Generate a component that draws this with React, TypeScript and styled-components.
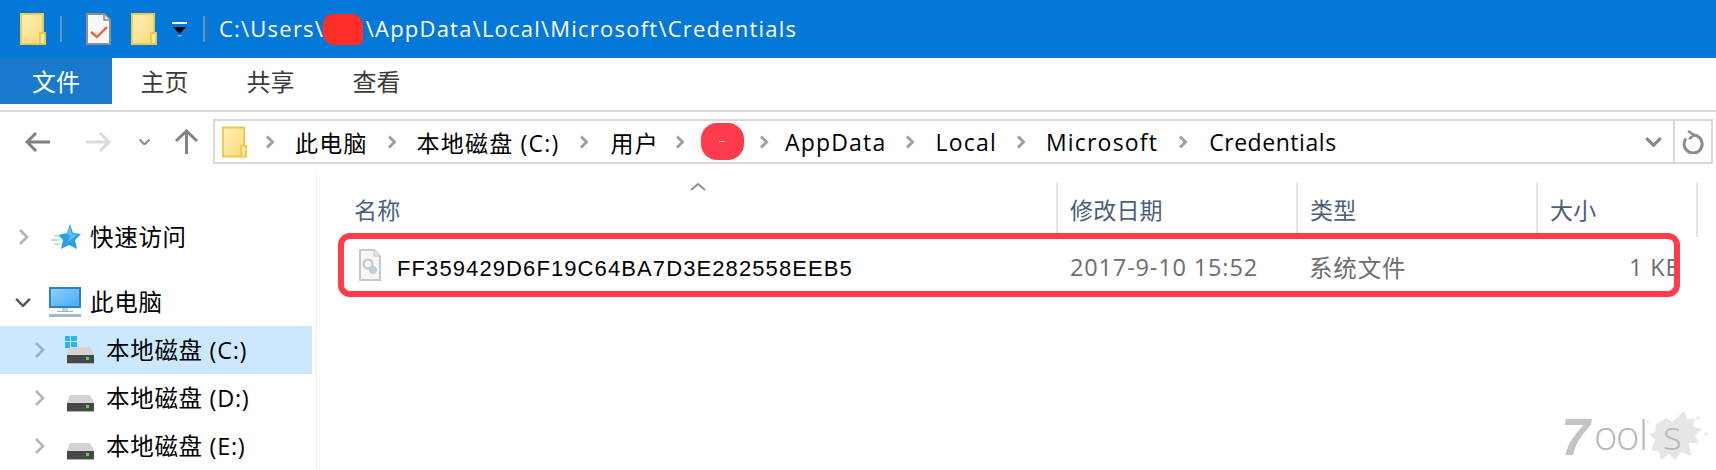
import React from "react";
import styled, { createGlobalStyle } from "styled-components";

const Global = createGlobalStyle`
  html, body { margin: 0; padding: 0; background: #fff; }
  body { width: 1716px; height: 470px; overflow: hidden; font-family: "Noto Sans", "Noto Sans CJK SC", sans-serif; }
`;

const FONT = `"Open Sans", "Noto Sans CJK SC", sans-serif`;

const Win = styled.div`
  position: relative;
  width: 1716px;
  height: 470px;
  overflow: hidden;
  display: flex;
  flex-direction: column;
  font-family: ${FONT};
`;

/* title bar */
const TitleBar = styled.div`
  height: 58px;
  background: #0378d7;
  display: flex;
  align-items: center;
  padding-left: 20px;
  flex: none;
`;
const TitleSep = styled.span<{ $ml: number }>`
  width: 5px;
  height: 26px;
  margin-left: ${p => p.$ml}px;
  box-sizing: border-box;
  border-left: 2px solid #4a9be0;
  border-right: 2px solid #2a6fb0;
  flex: none;
`;
const TitleSlot = styled.span<{ $ml: number }>`
  display: flex;
  margin-left: ${p => p.$ml}px;
  flex: none;
`;
const TitleText = styled.span`
  margin: 0 0 3px 11px;
  color: #fff;
  font-size: 22px;
  letter-spacing: 1.22px;
  white-space: nowrap;
  display: flex;
  align-items: center;
  position: relative;
`;
const Scribble = styled.span`
  position: absolute;
  left: 104px;
  top: 1px;
  width: 40px;
  height: 31px;
  background: #ff2e26;
  border-radius: 10px 12px 6px 12px;
`;

/* ribbon */
const Ribbon = styled.div`
  height: 46px;
  display: flex;
  flex: none;
`;
const Tab = styled.div<{ $active?: boolean; $w: number }>`
  width: ${p => p.$w}px;
  display: flex;
  align-items: center;
  justify-content: center;
  padding-bottom: 2px;
  box-sizing: border-box;
  font-size: 24px;
  background: ${p => (p.$active ? "#1979ca" : "#fff")};
  color: ${p => (p.$active ? "#fff" : "#3b3b3b")};
`;
const RibbonRule = styled.div`
  margin-top: 6px;
  height: 2px;
  background: #dadada;
  flex: none;
`;

/* navigation */
const NavRow = styled.div`
  height: 58px;
  display: flex;
  align-items: center;
  flex: none;
  padding-top: 1px;
  box-sizing: border-box;
`;
const NavBtn = styled.span<{ $w: number }>`
  width: ${p => p.$w}px;
  display: flex;
  justify-content: center;
  flex: none;
`;
const AddressBar = styled.div`
  margin-left: 8px;
  width: 1500px;
  height: 45px;
  box-sizing: border-box;
  border: 2px solid #d9d9d9;
  display: flex;
  align-items: center;
  flex: none;
`;
const Crumbs = styled.div`
  flex: 1;
  display: flex;
  align-items: center;
  padding-left: 7px;
`;
const Crumb = styled.span<{ $tight?: boolean }>`
  font-size: 23px;
  letter-spacing: ${p => (p.$tight ? 0.55 : 1.2)}px;
  color: #000;
  white-space: nowrap;
`;
const CrumbChevron = styled.span<{ $l: number; $r: number }>`
  display: flex;
  margin: 0 ${p => p.$r}px 0 ${p => p.$l}px;
`;
const RedactDot = styled.span`
  width: 43px;
  height: 37px;
  border-radius: 16px;
  background: #ff3b4c;
  display: flex;
  align-items: center;
  justify-content: center;
  &::after {
    content: "";
    width: 6px;
    height: 1px;
    background: #ffd0d0;
  }
`;
const BarEnd = styled.span<{ $w: number; $line?: boolean }>`
  width: ${p => p.$w}px;
  height: 100%;
  display: flex;
  align-items: center;
  justify-content: center;
  box-sizing: border-box;
  border-left: ${p => (p.$line ? "2px solid #d9d9d9" : "none")};
  flex: none;
`;

/* body */
const Body = styled.div`
  flex: 1;
  display: flex;
  min-height: 0;
  padding-top: 1px;
`;
const Sidebar = styled.div`
  width: 312px;
  padding-top: 42px;
  display: flex;
  flex-direction: column;
  flex: none;
`;
const TreeRow = styled.div<{ $level: number; $selected?: boolean; $gap?: number }>`
  height: 48px;
  flex: none;
  display: flex;
  align-items: center;
  padding-left: ${p => 14 + p.$level * 16}px;
  margin-bottom: ${p => p.$gap ?? 0}px;
  background: ${p => (p.$selected ? "#cce8ff" : "transparent")};
`;
const Expander = styled.span<{ $inset?: number }>`
  width: 32px;
  box-sizing: border-box;
  padding-left: ${p => p.$inset ?? 4}px;
  display: flex;
  align-items: center;
  flex: none;
`;
const TreeIcon = styled.span<{ $inset?: number }>`
  width: 44px;
  box-sizing: border-box;
  padding-left: ${p => p.$inset ?? 3}px;
  display: flex;
  align-items: center;
  flex: none;
`;
const TreeLabel = styled.span`
  font-size: 23.5px;
  letter-spacing: 0.7px;
  color: #000;
  white-space: nowrap;
  padding-bottom: 3px;
`;
const Gutter = styled.div`
  width: 5px;
  flex: none;
  box-sizing: border-box;
  border-right: 1px solid #f0f0f0;
`;

const List = styled.div`
  flex: 1;
  position: relative;
  padding-top: 12px;
  display: flex;
  flex-direction: column;
`;
const ListHeader = styled.div`
  height: 54px;
  display: grid;
  grid-template-columns: 741px 240px 240px 160px;
  flex: none;
`;
const HeadCell = styled.div<{ $first?: boolean; $last?: boolean }>`
  box-sizing: border-box;
  font-size: 23px;
  letter-spacing: 0.2px;
  color: #4c607a;
  padding: 7px 0 0 ${p => (p.$first ? 37 : 12)}px;
  border-right: 2px solid #e5e5e5;
  line-height: 40px;
`;
const SortCaret = styled.span`
  position: absolute;
  left: 373px;
  top: 11px;
  display: flex;
`;
const FileRow = styled.div`
  margin: -4px 0 0 21px;
  width: 1342px;
  height: 64px;
  box-sizing: border-box;
  border: 6px solid #ff3b4c;
  border-radius: 12px;
  overflow: hidden;
  display: grid;
  grid-template-columns: 712px 240px 240px 1fr;
  align-items: center;
  flex: none;
`;
const NameCell = styled.div`
  display: flex;
  align-items: center;
  padding-left: 15px;
`;
const FileName = styled.span`
  margin: 7px 0 0 16px;
  font-size: 22px;
  letter-spacing: 1.1px;
  color: #000;
  white-space: nowrap;
  font-family: "Liberation Sans", "Noto Sans CJK SC", sans-serif;
`;
const DimCell = styled.div<{ $pl: number }>`
  padding: 4px 0 0 ${p => p.$pl}px;
  font-size: 23.5px;
  color: #6d6d6d;
  white-space: nowrap;
  letter-spacing: 0.85px;
`;
const Watermark = styled.div`
  position: absolute;
  right: 6px;
  bottom: 0;
  display: flex;
`;

/* drawings */
const Folder = ({ w = 26, h = 32 }: { w?: number; h?: number }) => (
  <svg width={w} height={h} viewBox="0 0 26 32">
    <defs>
      <linearGradient id="fg" x1="0" y1="0" x2="1" y2="1">
        <stop offset="0" stopColor="#fff0b8" />
        <stop offset="1" stopColor="#fbd977" />
      </linearGradient>
    </defs>
    <path d="M1 1h22v30H1z" fill="url(#fg)" stroke="#eec94f" strokeWidth="2" />
    <path d="M20 20h5v11h-5z" fill="#fce9a4" stroke="#eec94f" strokeWidth="2" />
  </svg>
);
const CheckDoc = () => (
  <svg width="25" height="32" viewBox="0 0 25 32">
    <path d="M1 1h17l6 6v24H1z" fill="#f8f8f8" stroke="#8e8e8e" strokeWidth="2" />
    <path d="M18 1v6h6" fill="#ddd" stroke="#8e8e8e" strokeWidth="1.5" />
    <path d="M5 19l6 5 10-10" fill="none" stroke="#ec5f34" strokeWidth="2.4" />
  </svg>
);
const QuickDrop = () => (
  <svg width="15" height="15" viewBox="0 0 15 15">
    <rect x="0" y="0" width="15" height="2" fill="#fff" />
    <path d="M1 5h13l-6.500 7z" fill="#000" />
    <path d="M5 13h5l-2.500 2z" fill="#7fb8ea" />
  </svg>
);
const Chev = ({ color = "#a0a0a0", w = 3 }: { color?: string; w?: number }) => (
  <svg width="10" height="14" viewBox="0 0 10 14">
    <path d="M2 1.500l5.500 5.500L2 12.500" fill="none" stroke={color} strokeWidth={w} />
  </svg>
);
const BigChev = ({ color = "#b4b4b4" }: { color?: string }) => (
  <svg width="12" height="18" viewBox="0 0 12 18">
    <path d="M2 2l7 7-7 7" fill="none" stroke={color} strokeWidth="2.6" />
  </svg>
);
const ChevDown = ({ color = "#555", size = 18, sw = 2.6 }: { color?: string; size?: number; sw?: number }) => (
  <svg width={size} height={size * 0.6} viewBox="0 0 18 11">
    <path d="M2 2l7 7 7-7" fill="none" stroke={color} strokeWidth={sw} />
  </svg>
);
const ArrowH = ({ dir, color }: { dir: "l" | "r"; color: string }) => (
  <svg width="25" height="22" viewBox="0 0 25 22" style={{ transform: dir === "r" ? "scaleX(-1)" : undefined }}>
    <path d="M11 2L2 11l9 9M2 11h23" fill="none" stroke={color} strokeWidth="3" />
  </svg>
);
const ArrowUp = () => (
  <svg width="25" height="25" viewBox="0 0 25 25">
    <path d="M2 12l10.500-10L23 12M12.500 2v23" fill="none" stroke="#838383" strokeWidth="3" />
  </svg>
);
const Refresh = () => (
  <svg width="22" height="24" viewBox="0 0 22 24">
    <path d="M11 5a9 9 0 1 1-7 3.500" fill="none" stroke="#8c8c8c" strokeWidth="3" />
    <path d="M6 1l6 4-5 4" fill="none" stroke="#8c8c8c" strokeWidth="2.500" />
  </svg>
);
const Star = () => (
  <svg width="30" height="26" viewBox="0 0 30 26">
    <path d="M19 0l3 9 8 1-6 6 2 9-8-4-8 4 2-9-5-5 9-2z" fill="#2b9fe6" />
    <path d="M0 16h8M3 12h6M3 20h6" stroke="#a6d6f2" strokeWidth="1.500" />
    <path d="M19 3l2 7 5 1-9 7 2-7-4-1z" fill="#5fbdf3" />
  </svg>
);
const Pc = () => (
  <svg width="32" height="30" viewBox="0 0 32 30">
    <defs>
      <linearGradient id="pcg" x1="0" y1="0" x2="1" y2="1">
        <stop offset="0" stopColor="#8fd4ff" />
        <stop offset="1" stopColor="#43a8ee" />
      </linearGradient>
    </defs>
    <rect x="1" y="1" width="30" height="19" fill="url(#pcg)" stroke="#2f83b8" strokeWidth="2" />
    <rect x="13" y="21" width="6" height="3" fill="#c4d2de" />
    <rect x="8" y="24" width="16" height="1" fill="#9fb2c2" />
    <rect x="0" y="27" width="32" height="3" fill="#a9b8c6" />
  </svg>
);
const Drive = ({ win }: { win?: boolean }) => (
  <svg width="30" height="28" viewBox="0 0 30 28">
    {win && (
      <g fill="#29b6f2">
        <rect x="0" y="0" width="5" height="5" />
        <rect x="6" y="0" width="6" height="5" />
        <rect x="0" y="6" width="5" height="6" />
        <rect x="6" y="6" width="6" height="6" />
      </g>
    )}
    <path d="M5 11h20l4 7v2H2v-2z" fill="#d4d4d6" />
    <rect x="2" y="19" width="27" height="8" fill="#47484a" />
    <rect x="2" y="27" width="27" height="1" fill="#b4b4b4" />
    <rect x="21" y="21" width="3" height="3" fill="#3fdc45" />
  </svg>
);
const FileIcon = () => (
  <svg width="22" height="32" viewBox="0 0 22 32">
    <path d="M1 1h14l6 6v24H1z" fill="#f6f6f6" stroke="#c9c9c9" strokeWidth="2" />
    <path d="M15 1v6h6" fill="#e6e6e6" stroke="#c9c9c9" strokeWidth="1.200" />
    <circle cx="9" cy="15" r="4.500" fill="none" stroke="#c4c4c4" strokeWidth="2" />
    <circle cx="14" cy="21" r="3.500" fill="#bcd3e3" stroke="#c4c4c4" />
  </svg>
);
const Caret = () => (
  <svg width="16" height="9" viewBox="0 0 16 9">
    <path d="M1 8l7-6 7 6" fill="none" stroke="#8f8f8f" strokeWidth="1.800" />
  </svg>
);
const Logo = () => (
  <svg width="150" height="70" viewBox="0 0 150 70">
    <path
      d="M96 24l10-6 6 4 12-11 3 8 8 0-2 8 10 2-8 6 4 8-10 0 2 13-10-4-6 8-6-6-8 6-2-8-8-2 4-10-6-6 6-2z"
      fill="#e6e6e6"
    />
    <circle cx="138" cy="18" r="1.500" fill="#e6e6e6" />
    <circle cx="146" cy="34" r="1.500" fill="#e6e6e6" />
    <circle cx="88" cy="22" r="1.200" fill="#e6e6e6" />
    <text x="1" y="55" fontFamily="'Liberation Sans', sans-serif" fontWeight="700" fontStyle="italic" fontSize="52" fill="#c4c4c4">7</text>
    <text x="34 56 79 103" y="50" fontFamily="'Open Sans', sans-serif" fontWeight="300" fontSize="40" fill="#b8b8b8">ools</text>
  </svg>
);

const trail: { node: React.ReactNode; after: number }[] = [
  { node: <Crumb>此电脑</Crumb>, after: 39 },
  { node: <Crumb>本地磁盘 (C:)</Crumb>, after: 41 },
  { node: <Crumb>用户</Crumb>, after: 32 },
  { node: <RedactDot />, after: 31 },
  { node: <Crumb>AppData</Crumb>, after: 39 },
  { node: <Crumb>Local</Crumb>, after: 39 },
  { node: <Crumb>Microsoft</Crumb>, after: 41 },
  { node: <Crumb $tight>Credentials</Crumb>, after: 0 },
];

export default function App() {
  return (
    <Win>
      <Global />
      <TitleBar>
        <Folder />
        <TitleSep $ml={14} />
        <TitleSlot $ml={21}><CheckDoc /></TitleSlot>
        <TitleSlot $ml={20}><Folder /></TitleSlot>
        <TitleSlot $ml={15}><QuickDrop /></TitleSlot>
        <TitleSep $ml={16} />
        <TitleText>
          C:\Users\&nbsp;&nbsp;&nbsp;&nbsp;&nbsp;&nbsp;\AppData\Local\Microsoft\Credentials
          <Scribble />
        </TitleText>
      </TitleBar>
      <Ribbon>
        <Tab $active $w={112}>文件</Tab>
        <Tab $w={105}>主页</Tab>
        <Tab $w={107}>共享</Tab>
        <Tab $w={105}>查看</Tab>
      </Ribbon>
      <RibbonRule />
      <NavRow>
        <NavBtn $w={75}><ArrowH dir="l" color="#808080" /></NavBtn>
        <NavBtn $w={46}><ArrowH dir="r" color="#dcdcdc" /></NavBtn>
        <NavBtn $w={46}><ChevDown color="#8a8a8a" size={13} sw={3} /></NavBtn>
        <NavBtn $w={38}><ArrowUp /></NavBtn>
        <AddressBar>
          <Crumbs>
            <Folder w={25} h={32} />
            <CrumbChevron $l={18} $r={20}><Chev /></CrumbChevron>
            {trail.map((c, i) => (
              <React.Fragment key={i}>
                {c.node}
                {c.after > 0 && (
                  <CrumbChevron $l={Math.floor(c.after / 2)} $r={Math.ceil(c.after / 2)}><Chev /></CrumbChevron>
                )}
              </React.Fragment>
            ))}
          </Crumbs>
          <BarEnd $w={40}><ChevDown color="#888" size={19} sw={3} /></BarEnd>
          <BarEnd $w={38} $line><Refresh /></BarEnd>
        </AddressBar>
      </NavRow>
      <Body>
        <Sidebar>
          <TreeRow $level={0} $gap={17}>
            <Expander><BigChev /></Expander>
            <TreeIcon $inset={5}><Star /></TreeIcon>
            <TreeLabel>快速访问</TreeLabel>
          </TreeRow>
          <TreeRow $level={0}>
            <Expander $inset={0}><ChevDown color="#555" /></Expander>
            <TreeIcon><Pc /></TreeIcon>
            <TreeLabel>此电脑</TreeLabel>
          </TreeRow>
          <TreeRow $level={1} $selected>
            <Expander><BigChev color="#9fb0bd" /></Expander>
            <TreeIcon><Drive win /></TreeIcon>
            <TreeLabel>本地磁盘 (C:)</TreeLabel>
          </TreeRow>
          <TreeRow $level={1}>
            <Expander><BigChev /></Expander>
            <TreeIcon><Drive /></TreeIcon>
            <TreeLabel>本地磁盘 (D:)</TreeLabel>
          </TreeRow>
          <TreeRow $level={1}>
            <Expander><BigChev /></Expander>
            <TreeIcon><Drive /></TreeIcon>
            <TreeLabel>本地磁盘 (E:)</TreeLabel>
          </TreeRow>
        </Sidebar>
        <Gutter />
        <List>
          <SortCaret><Caret /></SortCaret>
          <ListHeader>
            <HeadCell $first>名称</HeadCell>
            <HeadCell>修改日期</HeadCell>
            <HeadCell>类型</HeadCell>
            <HeadCell>大小</HeadCell>
          </ListHeader>
          <FileRow>
            <NameCell>
              <FileIcon />
              <FileName>FF359429D6F19C64BA7D3E282558EEB5</FileName>
            </NameCell>
            <DimCell $pl={14}>2017-9-10 15:52</DimCell>
            <DimCell $pl={13}>系统文件</DimCell>
            <DimCell $pl={93}>1 KB</DimCell>
          </FileRow>
        </List>
      </Body>
      <Watermark><Logo /></Watermark>
    </Win>
  );
}
